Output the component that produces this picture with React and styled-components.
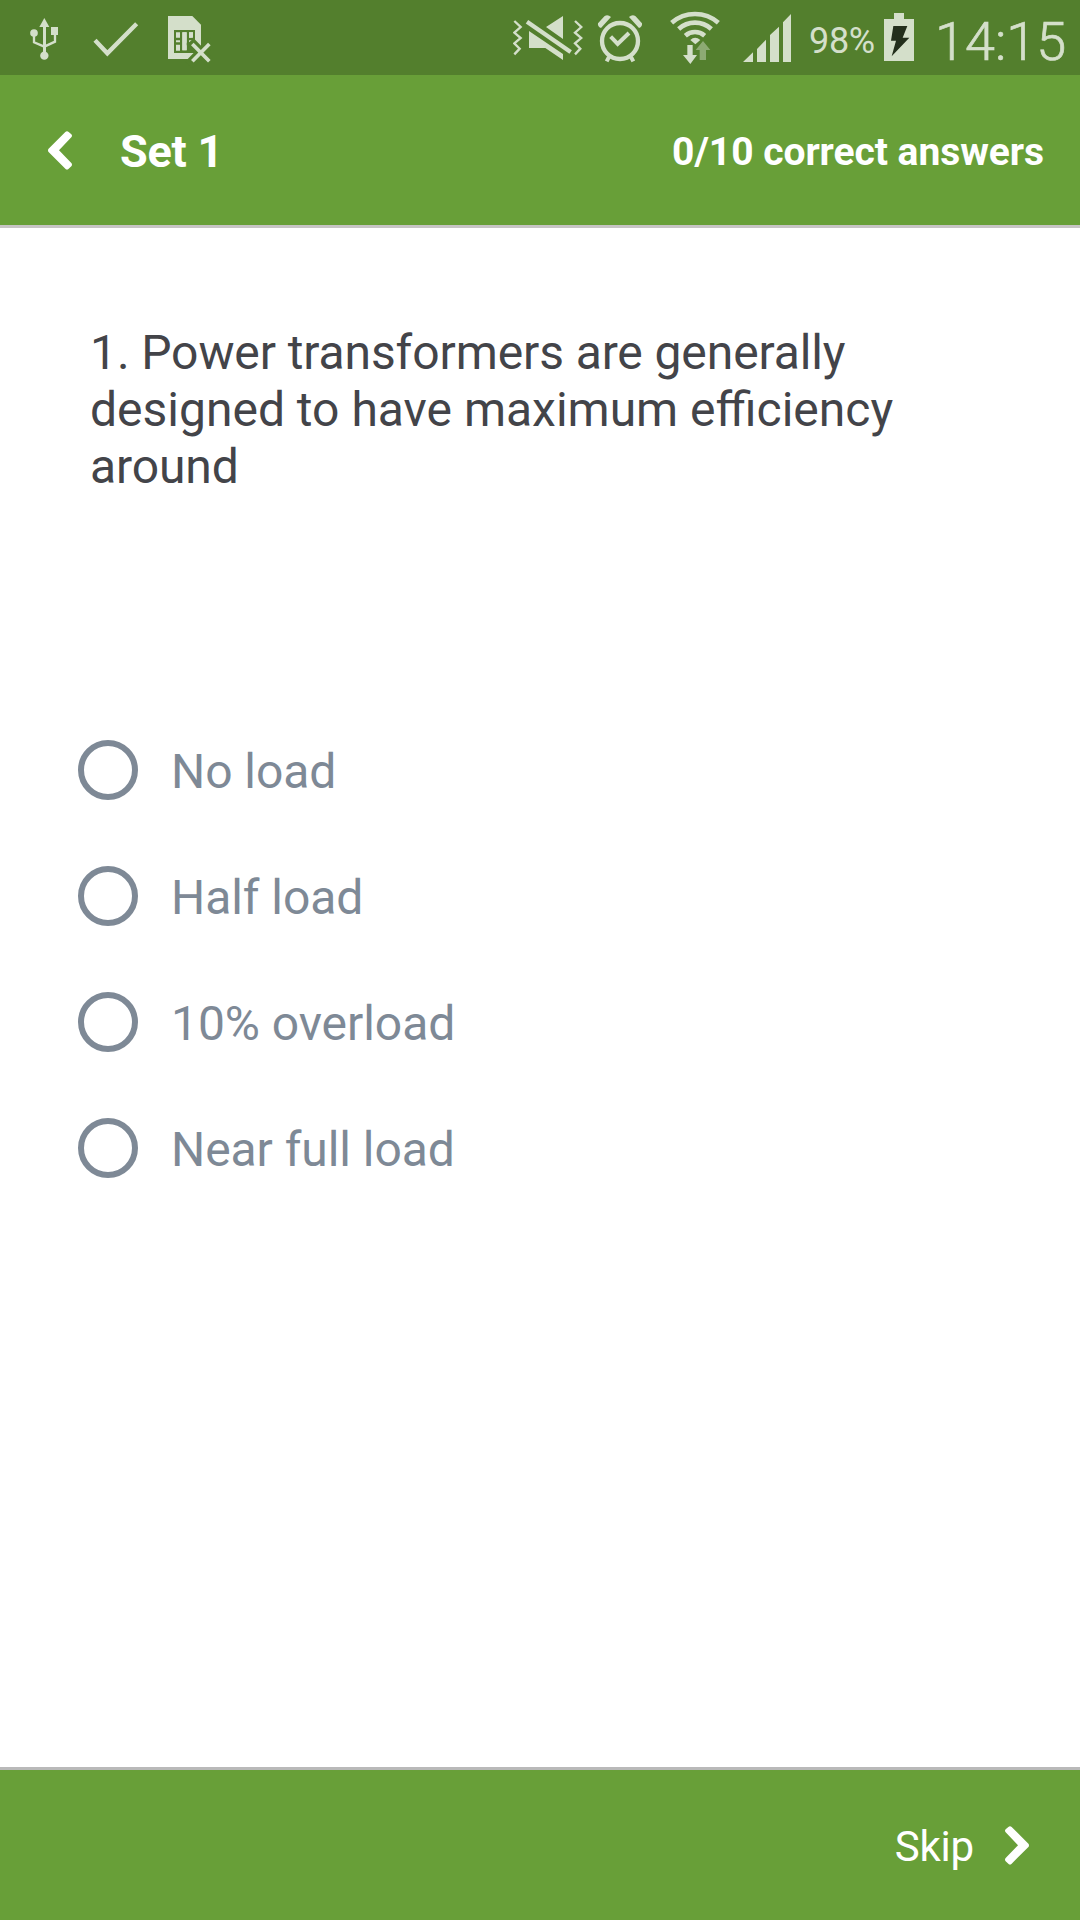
import styled, { createGlobalStyle } from 'styled-components';

const GlobalStyle = createGlobalStyle`
  * {
    box-sizing: border-box;
  }

  body {
    margin: 0;
    background: #fff;
    font-family: Roboto, "Liberation Sans", sans-serif;
  }
`;

const Screen = styled.div`
  display: flex;
  flex-direction: column;
  width: 1080px;
  height: 1920px;
  background: #fff;
`;

const StatusBar = styled.div`
  display: flex;
  justify-content: space-between;
  height: 75px;
  padding: 0 15px 0 30px;
  background: #537f2d;
  color: #d4dfca;
`;

const StatusGroup = styled.div`
  display: flex;
`;

const Svg = styled.svg`
  display: block;
  flex: none;
  width: ${(props) => props.$width}px;
  height: 75px;
  margin-right: ${(props) => props.$space || 0}px;
  fill: currentColor;
`;

const Percent = styled.span`
  width: 67px;
  margin: 0 8px 0 18px;
  font-size: 36px;
  line-height: 82px;
  letter-spacing: -0.3px;
  white-space: nowrap;
`;

const Clock = styled.span`
  width: 130px;
  margin-left: 21px;
  font-size: 54px;
  font-weight: 300;
  line-height: 83px;
  -webkit-text-stroke: 0.7px currentColor;
  white-space: nowrap;
`;

const Header = styled.header`
  display: flex;
  align-items: center;
  height: 153px;
  padding: 0 36px 0 48px;
  border-bottom: 3px solid #c7c4c4;
  background: #689f38;
  color: #fff;
`;

const Title = styled.h1`
  margin: 4px 0 0 47px;
  font-size: 45px;
  font-weight: 700;
  line-height: 54px;
  letter-spacing: -0.2px;
`;

const Score = styled.div`
  margin: 3px 0 0 auto;
  font-size: 39px;
  font-weight: 700;
  line-height: 46px;
  letter-spacing: -0.05px;
`;

const Main = styled.main`
  flex: 1;
  padding: 96px 90px 0 78px;
`;

const Question = styled.p`
  height: 416px;
  margin: 0;
  padding-left: 12px;
  color: #434449;
  font-size: 48px;
  line-height: 57px;
`;

const Line = styled.span`
  display: block;
  letter-spacing: ${(props) => (props.$tight ? '-0.1px' : 'normal')};
`;

const Options = styled.ul`
  display: flex;
  flex-direction: column;
  gap: 66px;
  margin: 0;
  padding: 0;
  list-style: none;
`;

const Option = styled.li`
  display: flex;
  align-items: center;
  gap: 33px;
  height: 60px;
  color: #7e8996;
  font-size: 48px;
  line-height: 60px;
`;

const Radio = styled.span`
  width: 60px;
  height: 60px;
  border: 6px solid #7e8996;
  border-radius: 50%;
`;

const OptionLabel = styled.span`
  padding-top: 4px;
  letter-spacing: -0.06px;
`;

const Footer = styled.footer`
  display: flex;
  justify-content: flex-end;
  align-items: center;
  height: 153px;
  padding-right: 51px;
  border-top: 3px solid #b9b9b9;
  background: #689f38;
  color: #fff;
`;

const Skip = styled.span`
  margin: 4px 30px 0 0;
  font-size: 42px;
  line-height: 50px;
  letter-spacing: -0.2px;
`;

const lines = [
  { text: '1. Power transformers are generally ', tight: true },
  { text: 'designed to have maximum efficiency ', tight: false },
  { text: 'around', tight: true },
];

const options = ['No load', 'Half load', '10% overload', 'Near full load'];

function UsbIcon() {
  return (
    <Svg $width={28} $space={35} viewBox="90 0 84 225">
      <path d="M133 54L148 81H118Z" />
      <circle cx="102" cy="99" r="11.5" />
      <circle cx="133" cy="167" r="12.5" />
      <path d="M153 81h21v24h-21z" />
      <path d="M133 78V160M102 105V127L133 140L165 125V103" fill="none" stroke="currentColor" strokeWidth="7" />
      <path d="M129 78h9v84h-9z" />
    </Svg>
  );
}

function CheckIcon() {
  return (
    <Svg $width={46} $space={29} viewBox="278 0 138 225">
      <path d="M284 121L321 160L409 71" fill="none" stroke="currentColor" strokeWidth="13" />
    </Svg>
  );
}

function SimIcon() {
  return (
    <Svg $width={43} viewBox="504 0 129 225">
      <path d="M504 48H577L603 74V177H504Z" />
      <path d="M522 90h63v69h-63z" fill="#537f2d" />
      <path d="M528 97h12v16h-12zM528 121h12v6h-12zM528 134h12v18h-12zM547 97h13v54h-13zM567 97h12v16h-12zM567 121h12v6h-12z" />
      <path d="M577 132L628 184M628 132L577 184" stroke="#537f2d" strokeWidth="30" strokeLinecap="square" />
      <path d="M547 97h13v54h-13zM567 97h12v16h-12zM567 121h8l-8 6z" />
      <path d="M577 132L628 184M628 132L577 184" stroke="currentColor" strokeWidth="11" />
    </Svg>
  );
}

function MuteIcon() {
  return (
    <Svg $width={70} $space={14} viewBox="39 0 210 225">
      <path
        d="M43 63L62 81L43 98L62 114L43 130L59 146L43 163M225 63L244 81L225 98L244 114L225 130L241 146L225 163"
        fill="none"
        stroke="currentColor"
        strokeWidth="7"
      />
      <path d="M81 65L212 156" stroke="currentColor" strokeWidth="13" />
      <path d="M189 48V117L138 81ZM87 93L189 162V180L136 144H87Z" />
    </Svg>
  );
}

function AlarmIcon() {
  return (
    <Svg $width={46} $space={27} viewBox="291 0 138 225">
      <circle cx="360" cy="123" r="54" fill="none" stroke="currentColor" strokeWidth="13" />
      <path d="M332 110L353 132L387 99M327 171L320 184M393 171L400 184" fill="none" stroke="currentColor" strokeWidth="12" />
      <path d="M294 70L314 48Q324 43 333 51L303 84Q292 80 294 70ZM426 70L406 48Q396 43 387 51L417 84Q428 80 426 70Z" />
    </Svg>
  );
}

function WifiIcon() {
  return (
    <Svg $width={50} $space={23} viewBox="510 0 150 225">
      <path
        d="M515 68A107 107 0 0 1 655 68M536 87A73 73 0 0 1 634 87M556 107A44 44 0 0 1 614 107"
        fill="none"
        stroke="currentColor"
        strokeWidth="14"
      />
      <path d="M571 120Q585 107 601 120L586 133Z" />
      <path d="M562 135H578V165H591L571 192L549 165H562Z" />
      <path d="M609 123L631 150H618V180H599V150H587Z" opacity="0.45" />
    </Svg>
  );
}

function SignalIcon() {
  return (
    <Svg $width={48} viewBox="39 0 144 225">
      <path d="M39 186L69 157V186ZM81 186V147L108 119V186ZM120 186V105L147 80V186ZM159 186V67L183 42V186Z" />
    </Svg>
  );
}

function BatteryIcon() {
  return (
    <Svg $width={30} viewBox="462 0 90 225">
      <path d="M462 57H492V39H522V57H552V183H462Z" />
      <path d="M490 78H532L518 113H538L485 169L498 122H483Z" fill="#232f1c" />
    </Svg>
  );
}

function Chevron({ right }) {
  return (
    <Svg $width={25} viewBox="144 37 75 225">
      <path
        transform={right ? 'translate(363 0) scale(-1 1)' : undefined}
        d="M145 153Q143 149 145 145L196 94Q201 89 206 94L214 101Q218 105 214 110L177 149L214 187Q218 192 214 197L206 204Q201 209 196 204Z"
      />
    </Svg>
  );
}

function App() {
  return (
    <>
      <GlobalStyle />
      <Screen>
        <StatusBar>
          <StatusGroup>
            <UsbIcon />
            <CheckIcon />
            <SimIcon />
          </StatusGroup>
          <StatusGroup>
            <MuteIcon />
            <AlarmIcon />
            <WifiIcon />
            <SignalIcon />
            <Percent>98%</Percent>
            <BatteryIcon />
            <Clock>14:15</Clock>
          </StatusGroup>
        </StatusBar>
        <Header>
          <Chevron />
          <Title>Set 1</Title>
          <Score>0/10 correct answers</Score>
        </Header>
        <Main>
          <Question>
            {lines.map((line) => (
              <Line key={line.text} $tight={line.tight}>{line.text}</Line>
            ))}
          </Question>
          <Options>
            {options.map((option) => (
              <Option key={option}>
                <Radio />
                <OptionLabel>{option}</OptionLabel>
              </Option>
            ))}
          </Options>
        </Main>
        <Footer>
          <Skip>Skip</Skip>
          <Chevron right />
        </Footer>
      </Screen>
    </>
  );
}

export default App;
